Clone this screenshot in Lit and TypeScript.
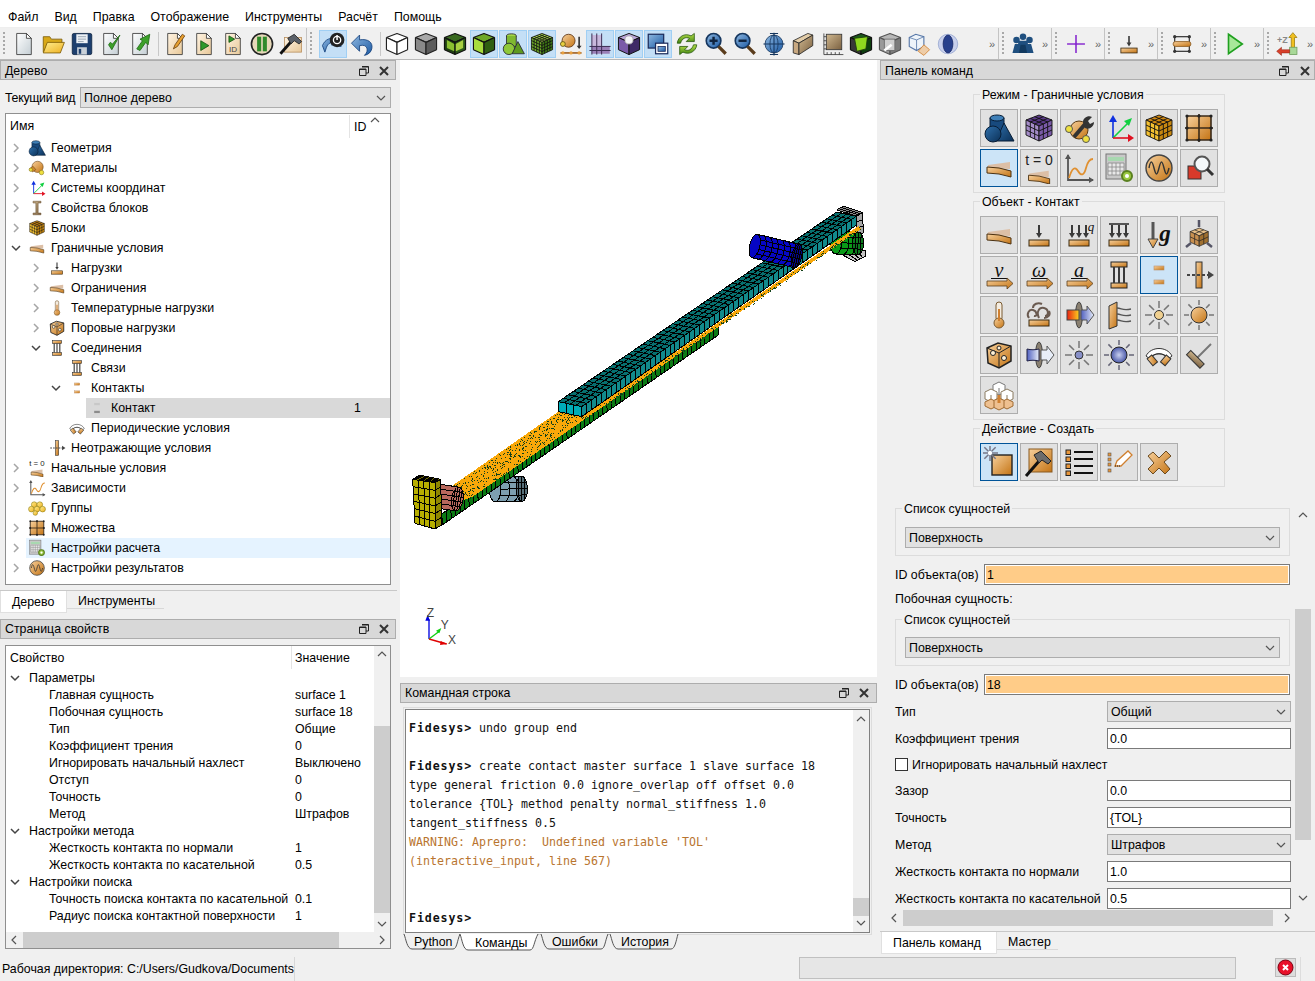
import { LitElement, html, css, svg } from 'lit';
import { customElement } from 'lit/decorators.js';

type P = [number, number];
const lerp = (a: P, b: P, t: number): P => [a[0] + (b[0] - a[0]) * t, a[1] + (b[1] - a[1]) * t];

// filled quad with a mesh drawn over it
function quad(a: P, b: P, c: P, d: P, nu: number, nv: number, fill: string, sw = 3, stroke = '#000') {
  let lines = '';
  for (let i = 0; i <= nu; i++) {
    const s = lerp(a, b, i / nu), e = lerp(d, c, i / nu);
    lines += `M${s[0]} ${s[1]}L${e[0]} ${e[1]}`;
  }
  for (let j = 0; j <= nv; j++) {
    const s = lerp(a, d, j / nv), e = lerp(b, c, j / nv);
    lines += `M${s[0]} ${s[1]}L${e[0]} ${e[1]}`;
  }
  return svg`<polygon points="${[a, b, c, d].map(p => p.join(',')).join(' ')}" fill=${fill}></polygon><path d=${lines} fill="none" stroke=${stroke} stroke-width=${sw}></path>`;
}

function cyl(a: P, b: P, r: number, e: number, nl: number, nr: number, fill: string, cap: string, sw = 3) {
  const len = Math.hypot(b[0] - a[0], b[1] - a[1]);
  const ux = (b[0] - a[0]) / len, uy = (b[1] - a[1]) / len;
  const px = -uy * r, py = ux * r;
  const ang = (Math.atan2(uy, ux) * 180) / Math.PI;
  const rx = e * r;
  const hull = `M${a[0] + px} ${a[1] + py}L${b[0] + px} ${b[1] + py}A${rx} ${r} ${ang} 0 0 ${b[0] - px} ${b[1] - py}L${a[0] - px} ${a[1] - py}A${rx} ${r} ${ang} 0 0 ${a[0] + px} ${a[1] + py}Z`;
  let lines = '';
  for (let i = 0; i <= nl; i++) {
    const c = lerp(a, b, i / nl);
    lines += `M${c[0] + px} ${c[1] + py}A${rx} ${r} ${ang} 0 0 ${c[0] - px} ${c[1] - py}`;
  }
  for (let j = 1; j < nr; j++) {
    const o = -1 + (2 * j) / nr;
    const s = Math.sqrt(1 - o * o) * rx;
    lines += `M${a[0] + px * o + ux * s} ${a[1] + py * o + uy * s}L${b[0] + px * o + ux * s} ${b[1] + py * o + uy * s}`;
  }
  let capLines = '';
  for (let j = 1; j < nr; j++) {
    const o = -1 + (2 * j) / nr;
    const s = Math.sqrt(1 - o * o) * rx;
    capLines += `M${b[0] + px * o - ux * s} ${b[1] + py * o - uy * s}L${b[0] + px * o + ux * s} ${b[1] + py * o + uy * s}`;
    capLines += `M${b[0] - ux * rx * o - px * Math.sqrt(1 - o * o)} ${b[1] - uy * rx * o - py * Math.sqrt(1 - o * o)}L${b[0] - ux * rx * o + px * Math.sqrt(1 - o * o)} ${b[1] - uy * rx * o + py * Math.sqrt(1 - o * o)}`;
  }
  return svg`<path d=${hull} fill=${fill} stroke="#000" stroke-width=${sw}></path>
    <path d=${lines} fill="none" stroke="#000" stroke-width=${sw}></path>
    <ellipse cx=${b[0]} cy=${b[1]} rx=${rx} ry=${r} transform="rotate(${ang} ${b[0]} ${b[1]})" fill=${cap} stroke="#000" stroke-width=${sw}></ellipse>
    <path d=${capLines} fill="none" stroke="#000" stroke-width=${sw}></path>`;
}

// speckle of black dots on the orange contact plate
function speckle(a: P, b: P, c: P, d: P, n: number, seed: number) {
  let s = seed;
  const rnd = () => ((s = (s * 16807) % 2147483647) / 2147483647);
  let dots = '';
  for (let i = 0; i < n; i++) {
    const u = rnd(), v = rnd();
    const p = lerp(lerp(a, b, u), lerp(d, c, u), v);
    dots += `M${p[0].toFixed(0)} ${p[1].toFixed(0)}h3v3h-3z`;
  }
  return svg`<path d=${dots} fill="#12401a"></path>`;
}

function scene() {
  return svg`
    <g shape-rendering="crispEdges">
      ${cyl([285, 868], [365, 866], 38, 0.45, 3, 4, '#7d9fb0', '#566f7a')}
      ${quad([1310, 30], [1330, 18], [1388, 38], [1370, 48], 3, 2, '#8a8a8a')}
      ${quad([1370, 48], [1388, 38], [1390, 100], [1370, 100], 1, 3, '#a8a8a8')}
      ${quad([1310, 155], [1395, 150], [1395, 170], [1365, 185], 4, 1, '#c4c4c4')}
      ${cyl([1308, 128], [1374, 130], 34, 0.5, 3, 4, '#0a9a18', '#0c7a1e')}
      ${quad([125, 942], [955, 378], [955, 405], [128, 974], 62, 1, '#0b7a14')}
      <polygon points="150,862 475,635 545,650 1375,78 1385,85 1000,350 215,892 190,900" fill="#f9a80a"></polygon>
      ${speckle([150, 862], [478, 636], [545, 652], [208, 896], 420, 77)}
      ${speckle([545, 652], [1375, 80], [1384, 86], [552, 664], 300, 1234)}
      ${quad([475, 605], [1310, 36], [1370, 48], [545, 620], 56, 4, '#06706f')}
      ${quad([545, 620], [1370, 48], [1370, 75], [545, 650], 56, 1, '#128a8c')}
      ${quad([475, 605], [545, 620], [545, 650], [475, 635], 3, 1, '#00adb8')}
      ${cyl([1064, 138], [1190, 168], 36, 0.42, 7, 5, '#0606c4', '#05058a')}
      ${cyl([58, 880], [172, 897], 36, 0.48, 1, 5, '#b9685c', '#bc6c60')}
      ${quad([38, 838], [105, 848], [105, 987], [45, 970], 4, 6, '#b7ae00')}
      ${quad([105, 848], [122, 838], [125, 975], [105, 987], 1, 6, '#8e8700')}
      ${quad([38, 838], [58, 825], [122, 838], [105, 848], 4, 1, '#6f6a00')}
    </g>
    <g fill="none">
      <path d="M87 1317V1258" stroke="#0000e0" stroke-width="4"></path>
      <path d="M76 1262l7-18 7 18z" fill="#0000e0"></path>
      <path d="M87 1317L118 1294" stroke="#10d010" stroke-width="4"></path>
      <path d="M108 1292l16-8-6 16z" fill="#10d010"></path>
      <path d="M87 1317L140 1332" stroke="#e00000" stroke-width="4"></path>
      <path d="M122 1323l20 9-22 3z" fill="#e00000"></path>
      <text x="80" y="1252" class="ax">Z</text>
      <text x="122" y="1286" class="ax">Y</text>
      <text x="144" y="1332" class="ax">X</text>
    </g>`;
}

// cube in the 32 box, three shaded faces and an n x n mesh
const cube = (t: string, l: string, r: string, n = 3, stroke = '#111', sw = 1) => svg`
  ${quad([16, 3], [29, 8], [16, 14], [3, 8], n, n, t, sw, stroke)}
  ${quad([3, 8], [16, 14], [16, 29], [3, 23], n, n, l, sw, stroke)}
  ${quad([16, 14], [29, 8], [29, 23], [16, 29], n, n, r, sw, stroke)}`;

const beam = svg`<polygon points="5,13 27,10 27,17 5,16" fill="#dcbfa6"></polygon>
  <path d="M4 15Q16 15 28 19V25Q16 21 4 21Z" fill="url(#or)" stroke="#4a3010"></path>`;
const plate = svg`<rect x="6" y="21" width="20" height="6" fill="url(#or)" stroke="#3a2a10"></rect>`;
const downArrow = (x: number) => svg`<path d="M${x} 6v10" stroke="#3a3a3a" stroke-width="2"></path><path d="M${x - 3} 14h6l-3 5z" fill="#3a3a3a"></path>`;
const hArrowPlate = svg`<path d="M4 22h20v-3l6 5.500-6 5.500v-3H4z" fill="url(#or)" stroke="#5a4020" stroke-width=".8"></path>`;
const column = svg`<rect x="8" y="3" width="16" height="5" fill="url(#or)" stroke="#222"></rect>
  <rect x="8" y="24" width="16" height="5" fill="url(#or)" stroke="#222"></rect>
  <path d="M11 8v16M16 8v16M21 8v16" stroke="#3a3a3a" stroke-width="2"></path>`;
const rays = (r0: number, r1: number, color: string) => {
  let d = '';
  for (let i = 0; i < 8; i++) {
    const a = (i * Math.PI) / 4;
    d += `M${16 + r0 * Math.cos(a)} ${16 + r0 * Math.sin(a)}L${16 + r1 * Math.cos(a)} ${16 + r1 * Math.sin(a)}`;
  }
  return svg`<path d=${d} stroke=${color} stroke-width="1.5" fill="none"></path>`;
};
const doc = (fill: string) => svg`<path d="M7 3h12l6 6v20H7z" fill=${fill} stroke="#333"></path><path d="M19 3v6h6z" fill="#fff" stroke="#333"></path>`;
const mag = (inner: string) => svg`<circle cx="13" cy="12" r="9" fill="url(#bl)" stroke="#16365e" stroke-width="2"></circle>
  <path d="M19 19l9 9" stroke="#5a3c1c" stroke-width="4"></path>
  <path d=${inner} stroke="#10243f" stroke-width="3"></path>`;
const ubeam = svg`<path d="M3 18C6 10 14 7 21 10l3-4 2 13-12-2 4-3c-4-1-8 1-10 6l-2 6z" fill="url(#bl)" stroke="#123f7a"></path>`;

const ICONS: Record<string, unknown> = {
  new: doc('url(#dc)'),
  open: svg`<path d="M4 26V7h8l2 3h13v6" fill="#d8a818" stroke="#7a5a08"></path><path d="M4 27l5-13h21l-5 13z" fill="url(#ye)" stroke="#7a5a08"></path>`,
  save: svg`<rect x="4" y="3" width="24" height="26" rx="2" fill="#1d3f6e" stroke="#0c2340"></rect><rect x="9" y="4" width="14" height="11" fill="#eef2f6"></rect><path d="M11 7h10M11 10h10M11 13h7" stroke="#8a99a8"></path><rect x="10" y="20" width="12" height="9" fill="#c8d0d8"></rect><rect x="12" y="22" width="3" height="6" fill="#1d3f6e"></rect>`,
  imp: svg`${doc('url(#dc)')}<path d="M13 17l4 6 10-18-9 11-3-2z" fill="#3ca02a" stroke="#1e6a12"></path>`,
  exp: svg`${doc('url(#dc)')}<path d="M12 22l7-10-3-2 12-6-2 13-3-3-7 10z" fill="#3ca02a" stroke="#1e6a12"></path>`,
  jour: svg`${doc('url(#cr)')}<path d="M14 22l2-5 9-13 3 2-9 13z" fill="#e8a030" stroke="#6a4010"></path>`,
  run: svg`${doc('url(#cr)')}<path d="M12 12l10 6-10 6z" fill="#2f9a2a" stroke="#14500f"></path>`,
  idd: svg`${doc('url(#cr)')}<path d="M11 6l7 4-7 4z" fill="#2f9a2a" stroke="#14500f"></path><text x="16" y="26" class="sans" font-size="10" text-anchor="middle" fill="#444">ID</text>`,
  pause: svg`<circle cx="16" cy="16" r="13" fill="#e6d8b8" stroke="#222" stroke-width="2"></circle><rect x="10" y="7" width="5" height="18" fill="#2f8a2a"></rect><rect x="17" y="7" width="5" height="18" fill="#2f8a2a"></rect>`,
  hamdoc: svg`<rect x="8" y="8" width="21" height="18" fill="url(#cr)" stroke="#b89060"></rect><path d="M3 28L18 11" stroke="#111" stroke-width="3.5"></path><path d="M12 9l8-5 9 9-3 3-6-4-4 4z" fill="#5a6068" stroke="#222"></path>`,
  puw: svg`${ubeam}<circle cx="21" cy="11" r="9" fill="#222"></circle><circle cx="21" cy="11" r="4.5" fill="none" stroke="#fff" stroke-width="1.6"></circle><path d="M21 5v6" stroke="#fff" stroke-width="1.8"></path>`,
  undo: svg`<path d="M3 15l10-10v6c10-2 17 3 15 11-1 4-4 7-9 8 3-3 4-6 3-9-1-3-4-4-9-3v7z" fill="url(#bl)" stroke="#123f7a"></path>`,
  wire: cube('#fff', '#fff', '#fff', 1, '#222', 1.4),
  gray: cube('#a8a8a8', '#8a8a8a', '#5c5c5c', 1, '#222', 1.4),
  hollow: svg`${cube('#3a6a20', '#1f3f12', '#2c5a18', 1, '#111', 1.4)}<polygon points="6,11 15,16 15,25 6,21" fill="#8ac030"></polygon><polygon points="17,16 26,11 26,21 17,25" fill="#a8d040"></polygon>`,
  green: cube('#6ea828', '#a8dc3c', '#2f5f10', 1, '#111', 1.4),
  gshapes: svg`<ellipse cx="14" cy="6" rx="6" ry="2.5" fill="#a8d84a" stroke="#223"></ellipse><path d="M8 6v13h12V6" fill="#7fb830" stroke="#223"></path><circle cx="11" cy="22" r="7" fill="#8fc83a" stroke="#223"></circle><path d="M22 13l8 15H15z" fill="#5f9a20" stroke="#223"></path>`,
  gmesh: cube('#a8d84a', '#6ea828', '#3f7a14', 4),
  ball: svg`<circle cx="13" cy="12" r="8" fill="url(#or)" stroke="#5a3010"></circle><circle cx="6" cy="16" r="3" fill="#e8d040" stroke="#5a5010"></circle><path d="M26 7v13" stroke="#333" stroke-width="2"></path><path d="M23 18h6l-3 4z" fill="#333"></path><path d="M3 27h26" stroke="#a06020" stroke-width="2"></path><circle cx="6" cy="27" r="2" fill="#e8a040"></circle><circle cx="16" cy="27" r="2" fill="#e8a040"></circle><circle cx="26" cy="27" r="2" fill="#e8a040"></circle>`,
  pgrid: svg`<rect x="6" y="5" width="12" height="14" fill="#c8b8dc"></rect><rect x="6" y="19" width="22" height="9" fill="#9a80b8"></rect><path d="M6 3v26M12 3v26M18 3v26M3 19h26M3 24h26" stroke="#3a2a50" stroke-width="1.2"></path>`,
  pcube: svg`${cube('#b9a4d8', '#7a5aa8', '#3f2a66', 1, '#111', 1.2)}<circle cx="16" cy="11" r="5" fill="#f4f4f8" stroke="#aaa"></circle>`,
  stack: svg`<rect x="4" y="4" width="19" height="17" fill="url(#bl)" stroke="#1a2a5a" stroke-width="1.5"></rect><rect x="13" y="15" width="15" height="13" fill="#fff" stroke="#1a2a5a" stroke-width="1.5"></rect><rect x="16" y="19" width="9" height="6" fill="url(#bl)" stroke="#1a2a5a"></rect>`,
  refresh: svg`<path d="M4 15C5 7 13 2 21 6l4-3v10H15l4-4c-5-2-9 0-11 6z" fill="url(#gr)" stroke="#2a5a10"></path><path d="M28 17c-1 8-9 13-17 9l-4 3V19h10l-4 4c5 2 9 0 11-6z" fill="url(#gr)" stroke="#2a5a10"></path>`,
  zin: mag('M8 12h10M13 7v10'),
  zout: mag('M8 12h10'),
  globe: svg`<circle cx="16" cy="16" r="11" fill="url(#bl)" stroke="#16365e"></circle><ellipse cx="16" cy="16" rx="5" ry="11" fill="none" stroke="#16365e"></ellipse><path d="M3 16h26M16 2v28M11 3h10M11 29h10" stroke="#16365e" stroke-width="1.3"></path>`,
  tbox: svg`<polygon points="4,12 22,3 28,5 11,15" fill="#e2cca8" stroke="#222"></polygon><polygon points="4,12 11,15 11,29 4,27" fill="#c8a880" stroke="#222"></polygon><polygon points="11,15 28,5 28,18 11,29" fill="url(#tn)" stroke="#222"></polygon>`,
  ruler: svg`<rect x="9" y="4" width="19" height="19" fill="url(#tn)" stroke="#333"></rect><path d="M6 3v26h24M6 7h3M6 12h3M6 17h3M6 22h3M10 26v3M15 26v3M20 26v3M25 26v3" stroke="#333" fill="none"></path>`,
  gbox: svg`${cube('#1d5a1d', '#383838', '#0e3f0e', 1, '#111', 1.4)}<polygon points="8,9 24,7 22,22 11,25" fill="#8fd81f" stroke="#1a3a08"></polygon>`,
  xbox: svg`${cube('#b8b8b8', '#9a9a9a', '#7c7c7c', 1, '#555', 1.4)}<rect x="9" y="10" width="13" height="14" fill="#d0d0d0" stroke="#666"></rect><path d="M9 24l9-7" stroke="#fff" stroke-width="3"></path>`,
  wcube: svg`<polygon points="4,8 12,4 22,7 22,19 13,24 4,19" fill="#eef4fa" stroke="#5878a8" stroke-width="1.4"></polygon><path d="M13 11v13M4 8l9 3 9-4" stroke="#5878a8" fill="none"></path><polygon points="15,25 22,17 29,23 22,30" fill="#eecda8" stroke="#d08030"></polygon>`,
  oval: svg`<ellipse cx="16" cy="16" rx="12" ry="12" fill="#c8d0ec" stroke="#98a8d0"></ellipse><ellipse cx="16" cy="16" rx="6" ry="11" fill="#28408c" stroke="#182868"></ellipse>`,
  people: svg`<circle cx="16" cy="7" r="4" fill="#1f4f7f"></circle><circle cx="8" cy="11" r="4" fill="#1f4f7f"></circle><circle cx="24" cy="11" r="4" fill="#1f4f7f"></circle><path d="M3 27l3-11h20l3 11zM10 12h12v8H10z" fill="#1f4f7f"></path><path d="M11 27l2-10h6l2 10z" fill="#123a60"></path>`,
  plus: svg`<path d="M16 5v22M5 16h22" stroke="#8a2fd0" stroke-width="2"></path><circle cx="16" cy="16" r="1.5" fill="#8a2fd0"></circle>`,
  load: svg`${plate}${downArrow(16)}`,
  nodes: svg`<rect x="7" y="7" width="18" height="18" fill="none" stroke="#333" stroke-width="1.5"></rect><rect x="5" y="13" width="22" height="6" rx="3" fill="url(#or)" stroke="#8a5a20"></rect><circle cx="7" cy="7" r="2" fill="#333"></circle><circle cx="25" cy="7" r="2" fill="#333"></circle><circle cx="7" cy="25" r="2" fill="#333"></circle><circle cx="25" cy="25" r="2" fill="#333"></circle>`,
  play: svg`<path d="M8 4l17 12L8 28z" fill="#a8e89a" stroke="#1fa01f" stroke-width="2"></path>`,
  axz: svg`<text x="9" y="15" class="sans" font-size="11" font-weight="bold" text-anchor="middle" fill="#888">+Z</text><path d="M20 24V8h-3l5-6 5 6h-3v16z" fill="#f0c020" stroke="#a08010"></path><rect x="18" y="20" width="9" height="9" fill="#a8d898" stroke="#70a060"></rect><path d="M18 27H8v3L2 25l6-5v3h10z" fill="#d8402a" stroke="#8a2010" stroke-width=".6"></path>`,
  shapes: svg`<path d="M7 6v15h14V6" fill="#184a7e" stroke="#071d36"></path><ellipse cx="14" cy="6" rx="7" ry="3" fill="#3f80b8" stroke="#071d36"></ellipse><path d="M21 11l10 18H13z" fill="url(#nv)" stroke="#071d36"></path><circle cx="10" cy="22" r="8" fill="url(#nv)" stroke="#071d36"></circle>`,
  pmesh: cube('#5a3a88', '#a48cc8', '#7a5aa8', 3, '#111', .9),
  omesh: cube('#d08810', '#f4c030', '#c88810', 3, '#111', .9),
  mat: svg`<circle cx="17" cy="14" r="10" fill="url(#or)" stroke="#6a4010"></circle><path d="M3 17l6-4 5 6-6 4z" fill="#d08a30" stroke="#6a4010"></path><circle cx="24" cy="24" r="4" fill="#eee040" stroke="#807010"></circle><circle cx="5" cy="19" r="3" fill="#eee040" stroke="#807010"></circle>`,
  wrench: svg`<circle cx="16" cy="18" r="9" fill="url(#or)" stroke="#5a3a10"></circle><circle cx="6" cy="17" r="3.5" fill="#eee040" stroke="#555"></circle><circle cx="23" cy="27" r="3.5" fill="#eee040" stroke="#555"></circle><path d="M11 25L23 11" stroke="#333" stroke-width="4"></path><path d="M20 10c0-4 5-7 9-5l-4 4 2 3 4-2c0 5-5 8-9 6z" fill="#333"></path>`,
  axes: svg`<path d="M10 26V7" stroke="#1030e0" stroke-width="1.6"></path><path d="M6 10l4-7 4 7z" fill="#1030e0"></path><path d="M10 26L25 11" stroke="#10d040" stroke-width="1.6"></path><path d="M21 9l8-3-3 8z" fill="#10d040"></path><path d="M10 26h17" stroke="#e01020" stroke-width="1.6"></path><path d="M25 22l6 4-6 4z" fill="#e01020"></path>`,
  ogrid: svg`<rect x="4" y="4" width="24" height="24" fill="url(#or)"></rect><path d="M4 4h24v24H4zM16 2v28M2 16h28" stroke="#3a2a18" stroke-width="1.6" fill="none"></path><circle cx="4" cy="4" r="1.6" fill="#222"></circle><circle cx="16" cy="4" r="1.6" fill="#222"></circle><circle cx="28" cy="4" r="1.6" fill="#222"></circle><circle cx="4" cy="16" r="1.6" fill="#222"></circle><circle cx="28" cy="16" r="1.6" fill="#222"></circle><circle cx="4" cy="28" r="1.6" fill="#222"></circle><circle cx="16" cy="28" r="1.6" fill="#222"></circle><circle cx="28" cy="28" r="1.6" fill="#222"></circle>`,
  bc: beam,
  t0: svg`<text x="16" y="13" class="sans" font-size="14" text-anchor="middle" fill="#222">t = 0</text><g transform="translate(2 10) scale(.88)">${beam}</g>`,
  graph: svg`<path d="M5 3v25h25" fill="none" stroke="#555" stroke-width="1.8"></path><path d="M2 7l3-5 3 5zM26 25l5 3-5 3z" fill="#555"></path><path d="M6 26c3-10 6-12 9-7s6 5 8-3 5-9 7-9" fill="none" stroke="#e09030" stroke-width="1.8"></path>`,
  calc: svg`<rect x="3" y="2" width="20" height="25" fill="#c8c8c8" stroke="#777"></rect><rect x="5" y="5" width="16" height="4" fill="#a8d8b0"></rect><path d="M5 11h16v12H5zM9 11v12M13 11v12M17 11v12M5 15h16M5 19h16" fill="#e8e8e8" stroke="#888" stroke-width=".8"></path><circle cx="24" cy="24" r="5" fill="#9ac840" stroke="#5a8020" stroke-width="2"></circle><circle cx="24" cy="24" r="2" fill="#fff"></circle>`,
  wave: svg`<circle cx="16" cy="16" r="13" fill="url(#or)" stroke="#444" stroke-width="1.4"></circle><path d="M6 16c1.500-8 3-8 5 0s3 8 5 0 3-8 5 0 3 8 5 0" fill="none" stroke="#333" stroke-width="1.4"></path>`,
  redmag: svg`<rect x="5" y="14" width="13" height="13" fill="#d83a2a" stroke="#333"></rect><circle cx="19" cy="12" r="7.500" fill="#f4f8fa" stroke="#555" stroke-width="2"></circle><path d="M24 17l6 6" stroke="#333" stroke-width="3"></path>`,
  loadq: svg`${plate}${downArrow(9)}${downArrow(16)}${downArrow(23)}<text x="28" y="12" class="serif" font-size="13" font-style="italic" text-anchor="middle" fill="#111">q</text>`,
  loadd: svg`${plate}<path d="M6 5h20" stroke="#333" stroke-width="1.6"></path>${downArrow(9)}${downArrow(16)}${downArrow(23)}`,
  gravity: svg`<path d="M10 3v19" stroke="#555" stroke-width="3"></path><path d="M5 20h10l-5 9z" fill="url(#or)" stroke="#444"></path><text x="22" y="22" class="serif" font-size="23" font-weight="bold" font-style="italic" text-anchor="middle" fill="#111">g</text>`,
  mini: svg`<g transform="translate(5 7) scale(.7)">${cube('#e8c088', '#c89050', '#a07030', 2, '#222', 1)}</g><path d="M16 1v7M3 28l5-4M29 28l-5-4" stroke="#556" stroke-width="2.500"></path>`,
  vel: svg`<text x="16" y="18" class="serif" font-size="20" font-style="italic" text-anchor="middle" fill="#111">v</text><path d="M8 19.500h16" stroke="#111"></path>${hArrowPlate}`,
  omega: svg`<text x="16" y="18" class="serif" font-size="20" font-style="italic" text-anchor="middle" fill="#111">ω</text><path d="M8 19.500h16" stroke="#111"></path>${hArrowPlate}`,
  acc: svg`<text x="16" y="18" class="serif" font-size="20" font-style="italic" text-anchor="middle" fill="#111">a</text><path d="M8 19.500h16" stroke="#111"></path>${hArrowPlate}`,
  column,
  contact: svg`<rect x="11" y="7" width="10" height="4" fill="url(#or)" stroke="#b89070" stroke-width=".6"></rect><rect x="11" y="21" width="10" height="4" fill="url(#or)" stroke="#b89070" stroke-width=".6"></rect>`,
  contactg: svg`<rect x="11" y="7" width="10" height="4" fill="#c8c8c8"></rect><rect x="11" y="21" width="10" height="4" fill="#8c8c8c"></rect>`,
  nonref: svg`<rect x="13" y="3" width="6" height="26" fill="url(#or)" stroke="#333"></rect><path d="M4 16h23" stroke="#444" stroke-width="2" stroke-dasharray="3 2"></path><path d="M25 12l6 4-6 4z" fill="#444"></path>`,
  thermo: svg`<rect x="13" y="3" width="6" height="19" rx="3" fill="#f4ece0" stroke="#7a5a30"></rect><circle cx="16" cy="24" r="5" fill="url(#or)" stroke="#7a5a30"></circle><path d="M16 10v12" stroke="#d08030" stroke-width="2"></path>`,
  wind: svg`${plate}<path d="M6 19c-3-4 0-9 4-8s5 7 1 6m5 2c-3-6 0-11 5-10s5 8 1 8m-12-8c0-4 5-6 9-4m2 14c4 0 7-3 5-7" fill="none" stroke="#6a5a50" stroke-width="2"></path>`,
  flux: svg`<ellipse cx="16" cy="16" rx="3.500" ry="13" fill="#8a8070" stroke="#444"></ellipse><rect x="4" y="11" width="12" height="10" fill="url(#hot)" stroke="#444"></rect><path d="M18 11h6V7l7 9-7 9v-4h-6z" fill="url(#bl2)" stroke="#555"></path>`,
  wall: svg`<polygon points="6,7 14,3 14,27 6,30" fill="url(#or)" stroke="#333"></polygon><path d="M14 9c5 0 5 3 14 1M14 15c5 0 5 3 14 1M14 21c5 0 5 3 14 1" fill="none" stroke="#555" stroke-width="1.300"></path>`,
  sun1: svg`${rays(7, 14, '#777')}<circle cx="16" cy="16" r="4.500" fill="#f0d090" stroke="#333"></circle>`,
  sun2: svg`${rays(10, 15, '#777')}<circle cx="16" cy="16" r="8" fill="url(#or)" stroke="#333"></circle>`,
  porous: svg`<polygon points="4,9 15,4 28,7 28,22 16,29 5,24" fill="url(#or)" stroke="#222" stroke-width="1.500"></polygon><path d="M4 9l12 5 12-7M16 14v15" stroke="#222" fill="none"></path><circle cx="10" cy="14" r="2.500" fill="#fff2d8" stroke="#222"></circle><circle cx="21" cy="19" r="2.500" fill="#fff2d8" stroke="#222"></circle><circle cx="16" cy="9" r="2" fill="#fff2d8" stroke="#222"></circle>`,
  bflux: svg`<ellipse cx="16" cy="16" rx="3.500" ry="13" fill="#8a8070" stroke="#444"></ellipse><path d="M4 10c4 1 8 1 12 0v12c-4-1-8-1-12 0z" fill="url(#bl2)" stroke="#224"></path><path d="M18 11h6V7l7 9-7 9v-4h-6z" fill="#e8eef8" stroke="#555"></path>`,
  sun3: svg`${rays(7, 14, '#777')}<circle cx="16" cy="16" r="4" fill="#8890c8" stroke="#333"></circle>`,
  sun4: svg`${rays(10, 15, '#667')}<circle cx="16" cy="16" r="8" fill="url(#bl3)" stroke="#222"></circle>`,
  periodic: svg`<path d="M3 17C8 7 24 7 29 17l-4 3C20 13 12 13 7 20z" fill="#fff" stroke="#333"></path><path d="M9 17c3-3 11-3 14 0" fill="none" stroke="#333"></path><rect x="6" y="17" width="6" height="9" transform="rotate(-40 9 21)" fill="url(#or)" stroke="#333"></rect><rect x="20" y="17" width="6" height="9" transform="rotate(40 23 21)" fill="url(#or)" stroke="#333"></rect>`,
  sweep: svg`<path d="M14 19L28 5" stroke="#777" stroke-width="2"></path><rect x="3" y="17" width="19" height="6" transform="rotate(45 12 20)" fill="url(#tn)" stroke="#333"></rect>`,
  cubes: svg`<g stroke="#777" fill="#fff"><polygon points="16,3 22,6 16,9 10,6"></polygon><path d="M10 6v7l6 3 6-3V6M16 9v7"></path></g><g stroke="#8a7a60" fill="#fff"><polygon points="8,10 14,13 8,16 2,13"></polygon><path d="M2 13v7l6 3 6-3v-7M8 16v7"></path><polygon points="24,10 30,13 24,16 18,13"></polygon><path d="M18 13v7l6 3 6-3v-7M24 16v7"></path></g><g stroke="#a06a30" fill="#eec090"><polygon points="8,20 14,23 8,26 2,23"></polygon><path d="M2 23v4l6 3 6-3v-4"></path><polygon points="24,20 30,23 24,26 18,23"></polygon><path d="M18 23v4l6 3 6-3v-4"></path><polygon points="16,19 21,21.500 16,24 11,21.500"></polygon><path d="M11 21.500v7l5 2.500 5-2.500v-7"></path></g><path d="M16 16v8" stroke="#d08030" stroke-width="3"></path>`,
  create: svg`<rect x="9" y="9" width="20" height="20" fill="url(#or)" stroke="#222" stroke-width="1.400"></rect><g transform="translate(-9 -9)">${rays(2, 8, '#778')}</g><circle cx="7" cy="7" r="2" fill="#fff"></circle>`,
  hammer: svg`<rect x="6" y="3" width="23" height="23" fill="url(#or)" stroke="#8a5a20"></rect><path d="M3 30L17 14" stroke="#111" stroke-width="3"></path><path d="M11 9l7-4 10 10-3 3-6-4-3 3z" fill="#6c6c6c" stroke="#222"></path>`,
  list: svg`<g fill="#e8963a" stroke="#222"><rect x="3" y="4" width="4.500" height="4.500"></rect><rect x="3" y="11" width="4.500" height="4.500"></rect><rect x="3" y="18" width="4.500" height="4.500"></rect><rect x="3" y="25" width="4.500" height="4.500"></rect></g><path d="M11 6h19M11 13h19M11 20h19M11 27h19" stroke="#111" stroke-width="2.200"></path>`,
  listed: svg`<g fill="#e8963a" stroke="#555" stroke-width=".6"><rect x="5" y="7" width="3" height="3"></rect><rect x="5" y="12" width="3" height="3"></rect><rect x="5" y="17" width="3" height="3"></rect><rect x="5" y="23" width="3" height="3"></rect></g><path d="M12 20l2-5 11-10 4 4-11 11z" fill="#fff" stroke="#d08030" stroke-width="1.300"></path><path d="M12 20l6 0" stroke="#222" stroke-dasharray="1 1"></path>`,
  xx: svg`<path d="M5 10l5-4 6 6 7-7 5 5-7 6 6 7-5 5-6-6-6 6-5-5 6-6z" fill="url(#or)" stroke="#6a4a20"></path>`,
  ibeam: svg`<path d="M9 4h14v3h-5v18h5v3H9v-3h5V7H9z" fill="url(#tn)" stroke="#6a5030"></path>`,
  groups: svg`<g fill="url(#ye)" stroke="#8a7a10"><circle cx="11" cy="10" r="5"></circle><circle cx="21" cy="10" r="5"></circle><circle cx="6" cy="18" r="5"></circle><circle cx="16" cy="18" r="5"></circle><circle cx="26" cy="18" r="5"></circle><circle cx="13" cy="25" r="4"></circle></g>`,
};

const icon = (name: string, size: number) => html`<svg class="ic" width=${size} height=${size} viewBox="0 0 32 32">${ICONS[name]}</svg>`;

const chev = (dir: string, cls = 'chev') => {
  const d: Record<string, string> = { r: 'M3 1l4 4-4 4', d: 'M1 3l4 4 4-4', u: 'M1 7l4-4 4 4', l: 'M7 1L3 5l4 4' };
  return html`<svg class=${cls} width="10" height="10" viewBox="0 0 10 10"><path d=${d[dir]} fill="none"></path></svg>`;
};

const dockBtns = html`
  <svg width="10" height="10" viewBox="0 0 10 10" class="dk"><path d="M3 .5h6.500v6.500H7M.5 3h6.500v6.500H.5z" fill="none" stroke="#222"></path><path d="M.5 3.500h6.500M3 1h6.500" stroke="#222"></path></svg>
  <svg width="10" height="10" viewBox="0 0 10 10" class="dk"><path d="M1 1l8 8M9 1l-8 8" stroke="#333" stroke-width="2"></path></svg>`;

const TB1 = ['new', 'open', 'save', 'imp', 'exp', '|', 'jour', 'run', 'idd', 'pause', 'hamdoc'];
const TB2 = ['puw*', 'undo', '|', 'wire', 'gray', 'hollow', 'green*', 'gshapes*', 'gmesh*', 'ball', 'pgrid*', 'pcube*', 'stack*', 'refresh', 'zin', 'zout', 'globe', 'tbox', 'ruler', 'gbox', 'xbox', 'wcube', 'oval'];
const TB3 = ['people', 'plus', 'load', 'nodes', 'play', 'axz'];

interface TreeRow { label: string; depth: number; icon: string; exp?: 'o' | 'c'; id?: string; cls?: string }
const TREE: TreeRow[] = [
  { label: 'Геометрия', depth: 0, icon: 'shapes', exp: 'c' },
  { label: 'Материалы', depth: 0, icon: 'mat', exp: 'c' },
  { label: 'Системы координат', depth: 0, icon: 'axes', exp: 'c' },
  { label: 'Свойства блоков', depth: 0, icon: 'ibeam', exp: 'c' },
  { label: 'Блоки', depth: 0, icon: 'omesh', exp: 'c' },
  { label: 'Граничные условия', depth: 0, icon: 'bc', exp: 'o' },
  { label: 'Нагрузки', depth: 1, icon: 'load', exp: 'c' },
  { label: 'Ограничения', depth: 1, icon: 'bc', exp: 'c' },
  { label: 'Температурные нагрузки', depth: 1, icon: 'thermo', exp: 'c' },
  { label: 'Поровые нагрузки', depth: 1, icon: 'porous', exp: 'c' },
  { label: 'Соединения', depth: 1, icon: 'column', exp: 'o' },
  { label: 'Связи', depth: 2, icon: 'column' },
  { label: 'Контакты', depth: 2, icon: 'contact', exp: 'o' },
  { label: 'Контакт', depth: 3, icon: 'contactg', id: '1', cls: 'sel' },
  { label: 'Периодические условия', depth: 2, icon: 'periodic' },
  { label: 'Неотражающие условия', depth: 1, icon: 'nonref' },
  { label: 'Начальные условия', depth: 0, icon: 't0', exp: 'c' },
  { label: 'Зависимости', depth: 0, icon: 'graph', exp: 'c' },
  { label: 'Группы', depth: 0, icon: 'groups' },
  { label: 'Множества', depth: 0, icon: 'ogrid', exp: 'c' },
  { label: 'Настройки расчета', depth: 0, icon: 'calc', exp: 'c', cls: 'hov' },
  { label: 'Настройки результатов', depth: 0, icon: 'wave', exp: 'c' },
];

const PROPS: [string, string, number][] = [
  ['Параметры', '', 0],
  ['Главная сущность', 'surface 1', 1],
  ['Побочная сущность', 'surface 18', 1],
  ['Тип', 'Общие', 1],
  ['Коэффициент трения', '0', 1],
  ['Игнорировать начальный нахлест', 'Выключено', 1],
  ['Отступ', '0', 1],
  ['Точность', '0', 1],
  ['Метод', 'Штрафов', 1],
  ['Настройки метода', '', 0],
  ['Жесткость контакта по нормали', '1', 1],
  ['Жесткость контакта по касательной', '0.5', 1],
  ['Настройки поиска', '', 0],
  ['Точность поиска контакта по касательной', '0.1', 1],
  ['Радиус поиска контактной поверхности', '1', 1],
];

const MODE = ['shapes', 'pmesh', 'wrench', 'axes', 'omesh', 'ogrid', 'bc*', 't0', 'graph', 'calc', 'wave', 'redmag'];
const OBJ = ['bc', 'load', 'loadq', 'loadd', 'gravity', 'mini', 'vel', 'omega', 'acc', 'column', 'contact*', 'nonref', 'thermo', 'wind', 'flux', 'wall', 'sun1', 'sun2', 'porous', 'bflux', 'sun3', 'sun4', 'periodic', 'sweep', 'cubes'];
const ACT = ['create*', 'hammer', 'list', 'listed', 'xx'];

const btnGrid = (names: string[]) => html`<div class="bgrid">${names.map(n => {
  const on = n.endsWith('*');
  return html`<div class="pb ${on ? 'on' : ''}">${icon(on ? n.slice(0, -1) : n, 32)}</div>`;
})}</div>`;

const tbBtn = (n: string) => {
  if (n === '|') return html`<div class="tsep"></div>`;
  const on = n.endsWith('*');
  return html`<div class="tb ${on ? 'on' : ''}">${icon(on ? n.slice(0, -1) : n, 26)}</div>`;
};

const vbar = (top: number, len: number, arrow = 16) => html`<div class="vsb">
  <div class="ar" style="height:${arrow}px">${chev('u')}</div>
  <div class="trk"><div class="th" style="margin-top:${top}px;height:${len}px"></div></div>
  <div class="ar" style="height:${arrow}px">${chev('d')}</div>
</div>`;

const hbar = (left: number, len: number) => html`<div class="hsb">
  <div class="ar">${chev('l')}</div>
  <div class="trk"><div class="th" style="margin-left:${left}px;width:${len}px"></div></div>
  <div class="ar">${chev('r')}</div>
</div>`;

const combo = (text: string, cls = '') => html`<div class="combo ${cls}"><span>${text}</span>${chev('d')}</div>`;

@customElement('app-root')
export class AppRoot extends LitElement {
  static styles = css`
    :host {
      display: block;
      width: 1315px;
      height: 981px;
      overflow: hidden;
      background: #f0f0f0;
      color: #000;
      font: 12.36px/14px 'Liberation Sans', Arial, sans-serif;
    }
    svg { display: block; flex: none; }
    .defs { width: 0; height: 0; }
    .sans { font-family: 'Liberation Sans', sans-serif; }
    .serif { font-family: 'Liberation Serif', serif; }
    .ax { font: 36px 'Liberation Sans', sans-serif; fill: #444; }
    .chev path { stroke: #555; stroke-width: 1.2; }
    .menu { height: 27px; background: #fff; display: flex; padding-top: 10px; box-sizing: border-box; }
    .menu span { padding: 0 8px; }
    .toolbar { height: 33px; box-sizing: border-box; display: flex; border-top: 1px solid #eee; border-bottom: 1px solid #b8b8b8; background: #f0f0f0; }
    .tgroup { display: flex; align-items: center; border-right: 1px solid #c4c4c4; flex: none; box-sizing: border-box; }
    .handle { width: 2px; height: 24px; margin: 0 5px 0 3px; flex: none; background: repeating-linear-gradient(#a8a8a8 0 2px, transparent 2px 4px); }
    .handle.wide { margin-right: 7px; }
    .tb { width: 28px; height: 28px; margin-right: 1px; display: flex; align-items: center; justify-content: center; border: 1px solid transparent; box-sizing: border-box; flex: none; }
    .tb.on { background: #c4dff6; border-color: #a0cff4; }
    .tsep { width: 1px; height: 24px; background: #c8c8c8; margin: 0 2.5px; flex: none; }
    .more { color: #666; font-size: 11px; letter-spacing: -1px; margin-left: auto; margin-right: 4px; }
    .main { display: grid; grid-template-columns: 397px 477px 435px; column-gap: 3px; height: 897px; }
    .col { display: flex; flex-direction: column; min-width: 0; }
    .dtitle { height: 20px; box-sizing: border-box; flex: none; display: flex; align-items: center; background: #d8d8d8; border: 1px solid #adadad; padding: 1px 7px 0 4px; gap: 10px; }
    .dtitle span { flex: 1; }
    .dtitle.lt { margin-right: 1px; padding-right: 6px; }
    .dtitle.rt { gap: 11px; padding-right: 4px; }
    .dtitle.cmd, .dtitle.prop { margin-top: 6px; padding-top: 0; }
    .curview { display: flex; align-items: center; margin: 7px 6px 5px 5px; }
    .curview > span { width: 75px; flex: none; white-space: nowrap; letter-spacing: -.3px; }
    .combo { height: 21px; box-sizing: border-box; background: #e1e1e1; border: 1px solid #adadad; display: flex; align-items: center; justify-content: space-between; padding: 0 4px 0 3px; flex: 1; }
    .box { background: #fff; border: 1px solid #8f8f8f; box-sizing: border-box; }
    .tree { margin: 0 6px 0 5px; height: 472px; }
    .thead { height: 24px; display: flex; align-items: center; }
    .thead .n { flex: none; width: 343px; padding-left: 4px; box-sizing: border-box; }
    .thead .i { flex: 1; height: 23px; border-left: 1px solid #e4e4e4; padding: 5px 0 0 4px; box-sizing: border-box; display: flex; }
    .thead .chev { margin: -5px 0 0 4px; }
    .trow { height: 20px; display: flex; align-items: center; }
    .exp { width: 20px; flex: none; display: flex; justify-content: center; }
    .trow .c .chev path { stroke: #a6a6a6; stroke-width: 1.500; }
    .trow .o .chev path { stroke: #444; stroke-width: 1.500; }
    .tcell { flex: 1; height: 20px; display: flex; align-items: center; padding-left: 2px; gap: 5px; min-width: 0; }
    .tcell .name { flex: 1; white-space: nowrap; }
    .tcell .id { width: 36px; flex: none; }
    .sel .tcell { background: #d9d9d9; }
    .hov .tcell { background: #e5f3ff; }
    .tabs { display: flex; flex: none; height: 23px; border-top: 1px solid #c8c8c8; box-sizing: border-box; }
    .tabs div { padding: 3px 10px 0 11px; height: 18px; border-bottom: 1px solid #d8d8d8; flex: none; white-space: nowrap; }
    .tabs .act { background: #fff; height: 22px; padding-top: 4px; border: 1px solid #e0e0e0; border-top: none; box-sizing: border-box; }
    .ltabs { margin-top: 5px; }
    .ltabs .act { width: 67px; }
    .ltabs .ina { width: 97px; box-sizing: border-box; }
    .props { margin: 6px 6px 0 5px; height: 304px; display: grid; grid-template-columns: 1fr 16px; grid-template-rows: 1fr 16px; }
    .pbody { min-width: 0; overflow: hidden; }
    .phead { height: 23px; display: flex; align-items: center; }
    .phead .a { width: 285px; padding-left: 4px; box-sizing: border-box; }
    .phead .b { border-left: 1px solid #e4e4e4; padding-left: 3px; height: 23px; display: flex; align-items: center; }
    .prow { height: 17px; display: flex; align-items: center; white-space: nowrap; }
    .prow .lbl { width: 289px; flex: none; box-sizing: border-box; display: flex; align-items: center; }
    .prow .tw { width: 18px; flex: none; display: flex; justify-content: center; }
    .prow .tw path { stroke: #444; stroke-width: 1.500; }
    .prow .ind { padding-left: 43px; }
    .prow .gr { gap: 5px; }
    .vsb { width: 16px; display: flex; flex-direction: column; background: #f0f0f0; flex: none; }
    .vsb .ar { display: flex; align-items: center; justify-content: center; flex: none; }
    .vsb .trk { flex: 1; min-height: 0; }
    .vsb .th { background: #cdcdcd; }
    .hsb { height: 16px; display: flex; background: #f0f0f0; grid-column: 1 / -1; align-items: stretch; }
    .hsb .ar { width: 16px; display: flex; align-items: center; justify-content: center; flex: none; }
    .hsb .trk { flex: 1; min-width: 0; }
    .hsb .th { background: #cdcdcd; height: 16px; }
    .view { height: 617px; background: #fff; flex: none; }
    .conout { margin: 4px 5px 0 3px; height: 228px; border: 1px solid #dcdcdc; padding: 1px; box-sizing: border-box; flex: none; }
    .con { height: 224px; display: flex; background: #fff; border: 1px solid #808080; box-sizing: border-box; }
    .conbody { flex: 1; padding: 9px 0 0 3px; font: 11.63px/19px 'DejaVu Sans Mono', monospace; white-space: pre; overflow: hidden; color: #111; }
    .conbody b { font-weight: bold; letter-spacing: .88px; }
    .warn { color: #b9752f; }
    .ctabs { flex: none; margin: -1px 0 0 3px; font: 12.36px 'Liberation Sans', sans-serif; }
    .fsets { display: flex; flex-direction: column; align-items: center; flex: none; height: 423px; padding: 7px 0 0 3px; box-sizing: border-box; }
    fieldset { margin: 0; border: 1px solid #dcdcdc; min-width: 0; }
    legend { padding: 0 2px; height: 14px; line-height: 16px; margin-left: 0; white-space: nowrap; }
    .fsets fieldset { width: 252px; box-sizing: border-box; padding: 8px 6px 5px; margin-bottom: 1px; }
    .bgrid { display: grid; grid-template-columns: repeat(6, 38px); grid-auto-rows: 38px; gap: 2px; }
    .pb { border: 1px solid #adadad; background: #e1e1e1; box-sizing: border-box; display: flex; align-items: center; justify-content: center; }
    .pb.on { background: #cce4f7; border-color: #005499; }
    .formwrap { display: flex; height: 407px; flex: none; margin-right: 4px; }
    .form { flex: 1; overflow: hidden; padding: 0 5px 0 15px; min-width: 0; box-sizing: border-box; }
    .form fieldset { box-sizing: border-box; padding: 12px 9px 7px; height: 55px; }
    .form fieldset legend { margin-left: -3px; }
    .form .f1 { margin-top: -2px; }
    .form .f2 { margin-top: 6px; height: 54px; padding-top: 11px; }
    .irow { display: flex; align-items: center; height: 21px; margin-top: 8px; gap: 6px; white-space: nowrap; }
    .irow > span { width: 83px; flex: none; }
    .input { height: 21px; box-sizing: border-box; background: #fff; border: 1px solid #7a7a7a; padding-left: 2px; line-height: 20px; }
    .input.hl { background: #fc8; box-shadow: inset 0 0 0 1px #fff; flex: 1; }
    .note { margin-top: 7px; height: 14px; }
    .frow { display: grid; grid-template-columns: 212px 184px; align-items: center; height: 21px; margin-top: 6px; white-space: nowrap; }
    .chk { display: flex; align-items: center; gap: 4px; height: 21px; margin: 5px 0 -1px; }
    .chk i { width: 11px; height: 11px; border: 1px solid #333; background: #fff; display: block; }
    .rhsb { margin-left: 6px; width: 409px; }
    .rtabs { margin-top: 5px; padding-left: 1px; }
    .rtabs .act { width: 116px; text-align: left; }
    .rtabs .ina { width: 61px; box-sizing: border-box; }
    .status { height: 24px; display: flex; }
    .stxt { width: 295px; box-sizing: border-box; padding: 5px 0 0 2px; border-right: 1px solid #d8d8d8; white-space: nowrap; flex: none; }
    .sbox { margin-left: 504px; width: 437px; height: 22px; box-sizing: border-box; background: #e6e6e6; border: 1px solid #c0c0c0; flex: none; }
    .serr { margin: 1px 0 0 39px; width: 21px; height: 19px; background: #ddd; border: 1px solid #bbb; box-sizing: border-box; display: flex; align-items: center; justify-content: center; flex: none; }
    .sgrip { margin-left: 4px; border-left: 1px solid #ddd; flex: 1; }
  `;

  render() {
    return html`
      <svg class="defs" width="0" height="0">
        <defs>
          <linearGradient id="or" x1="0" y1="0" x2="1" y2="1"><stop offset="0" stop-color="#f7d09c"></stop><stop offset="1" stop-color="#c47414"></stop></linearGradient>
          <linearGradient id="nv" x1="0" y1="0" x2="1" y2="1"><stop offset="0" stop-color="#2f70ac"></stop><stop offset="1" stop-color="#0b3057"></stop></linearGradient>
          <linearGradient id="gr" x1="0" y1="0" x2="0" y2="1"><stop offset="0" stop-color="#b8e04a"></stop><stop offset="1" stop-color="#3f8410"></stop></linearGradient>
          <linearGradient id="tn" x1="0" y1="0" x2="1" y2="1"><stop offset="0" stop-color="#d0b890"></stop><stop offset="1" stop-color="#7a6040"></stop></linearGradient>
          <linearGradient id="dc" x1="0" y1="0" x2="1" y2="1"><stop offset="0" stop-color="#fff"></stop><stop offset="1" stop-color="#c4ced4"></stop></linearGradient>
          <linearGradient id="cr" x1="0" y1="0" x2="1" y2="1"><stop offset="0" stop-color="#fff4e4"></stop><stop offset="1" stop-color="#e8c898"></stop></linearGradient>
          <linearGradient id="bl" x1="0" y1="0" x2="1" y2="1"><stop offset="0" stop-color="#8fb8e0"></stop><stop offset="1" stop-color="#1c5aa4"></stop></linearGradient>
          <linearGradient id="bl2" x1="0" y1="0" x2="1" y2="0"><stop offset="0" stop-color="#5060c0"></stop><stop offset="1" stop-color="#e8eef8"></stop></linearGradient>
          <radialGradient id="bl3"><stop offset="0" stop-color="#c8d0f0"></stop><stop offset="1" stop-color="#4a58a8"></stop></radialGradient>
          <linearGradient id="ye" x1="0" y1="0" x2="1" y2="1"><stop offset="0" stop-color="#ffee90"></stop><stop offset="1" stop-color="#eeb020"></stop></linearGradient>
          <linearGradient id="hot" x1="0" y1="0" x2="1" y2="0"><stop offset="0" stop-color="#e82010"></stop><stop offset="1" stop-color="#fcd020"></stop></linearGradient>
        </defs>
      </svg>
      <div class="menu">
        ${['Файл', 'Вид', 'Правка', 'Отображение', 'Инструменты', 'Расчёт', 'Помощь'].map(m => html`<span>${m}</span>`)}
      </div>
      <div class="toolbar">
        <div class="tgroup" style="width:307px"><div class="handle"></div>${TB1.map(tbBtn)}</div>
        <div class="tgroup" style="width:692px"><div class="handle wide"></div>${TB2.map(tbBtn)}<span class="more">»</span></div>
        ${TB3.map(n => html`<div class="tgroup" style="width:53px"><div class="handle"></div>${tbBtn(n)}<span class="more">»</span></div>`)}
      </div>
      <div class="main">
        <div class="col">
          <div class="dtitle lt"><span>Дерево</span>${dockBtns}</div>
          <div class="curview"><span>Текущий вид</span>${combo('Полное дерево')}</div>
          <div class="box tree">
            <div class="thead">
              <div class="n">Имя</div>
              <div class="i">ID${chev('u')}</div>
            </div>
            ${TREE.map(r => html`
              <div class="trow ${r.cls ?? ''}" style="padding-left:${r.depth * 20}px">
                <div class="exp ${r.exp ?? ''}">${r.exp ? chev(r.exp === 'o' ? 'd' : 'r') : ''}</div>
                <div class="tcell">${icon(r.icon, 18)}<span class="name">${r.label}</span><span class="id">${r.id ?? ''}</span></div>
              </div>`)}
          </div>
          <div class="tabs ltabs"><div class="act">Дерево</div><div class="ina">Инструменты</div></div>
          <div class="dtitle prop lt"><span>Страница свойств</span>${dockBtns}</div>
          <div class="box props">
            <div class="pbody">
              <div class="phead"><div class="a">Свойство</div><div class="b">Значение</div></div>
              ${PROPS.map(([k, v, d]) => html`
                <div class="prow">
                  <div class="lbl ${d ? 'ind' : 'gr'}">${d ? '' : html`<span class="tw">${chev('d')}</span>`}<span>${k}</span></div>
                  <span>${v}</span>
                </div>`)}
            </div>
            ${vbar(64, 187)}
            ${hbar(1, 316)}
          </div>
        </div>
        <div class="col">
          <div class="view">
            <svg width="477" height="617" viewBox="0 -420 1431 1851">${scene()}</svg>
          </div>
          <div class="dtitle cmd"><span>Командная строка</span>${dockBtns}</div>
          <div class="conout">
            <div class="con">
              <div class="conbody"><b>Fidesys&gt;</b> undo group end

<b>Fidesys&gt;</b> create contact master surface 1 slave surface 18
type general friction 0.0 ignore_overlap off offset 0.0
tolerance {TOL} method penalty normal_stiffness 1.0
tangent_stiffness 0.5
<span class="warn">WARNING: Aprepro:  Undefined variable 'TOL'
(interactive_input, line 567)</span>


<b>Fidesys&gt;</b></div>
              ${vbar(170, 18, 18)}
            </div>
          </div>
          <svg class="ctabs" width="300" height="20" viewBox="403 935 300 20">
            <path d="M404 935c2 5 3 15 8 15h41c4 0 4-8 7-15" fill="#f0f0f0" stroke="#555"></path>
            <path d="M610 935c2 5 3 15 8 15h53c4 0 5-8 7-15" fill="#f0f0f0" stroke="#555"></path>
            <path d="M541 935c2 5 3 15 8 15h52c4 0 4-8 7-15" fill="#f0f0f0" stroke="#555"></path>
            <path d="M460 935c2 5 3 16 8 16h62c4 0 4-9 8-16" fill="#fff" stroke="#555"></path>
            <text x="414" y="947">Python</text>
            <text x="475" y="948">Команды</text>
            <text x="552" y="947">Ошибки</text>
            <text x="621" y="947">История</text>
          </svg>
        </div>
        <div class="col">
          <div class="dtitle rt"><span>Панель команд</span>${dockBtns}</div>
          <div class="fsets">
            <fieldset><legend>Режим - Граничные условия</legend>${btnGrid(MODE)}</fieldset>
            <fieldset><legend>Объект - Контакт</legend>${btnGrid(OBJ)}</fieldset>
            <fieldset><legend>Действие - Создать</legend>${btnGrid(ACT)}</fieldset>
          </div>
          <div class="formwrap">
            <div class="form">
              <fieldset class="f1"><legend>Список сущностей</legend>${combo('Поверхность')}</fieldset>
              <div class="irow"><span>ID объекта(ов)</span><div class="input hl">1</div></div>
              <div class="note">Побочная сущность:</div>
              <fieldset class="f2"><legend>Список сущностей</legend>${combo('Поверхность')}</fieldset>
              <div class="irow"><span>ID объекта(ов)</span><div class="input hl">18</div></div>
              <div class="frow"><span>Тип</span>${combo('Общий')}</div>
              <div class="frow"><span>Коэффициент трения</span><div class="input">0.0</div></div>
              <div class="chk"><i></i><span>Игнорировать начальный нахлест</span></div>
              <div class="frow"><span>Зазор</span><div class="input">0.0</div></div>
              <div class="frow"><span>Точность</span><div class="input">{TOL}</div></div>
              <div class="frow"><span>Метод</span>${combo('Штрафов')}</div>
              <div class="frow"><span>Жесткость контакта по нормали</span><div class="input">1.0</div></div>
              <div class="frow"><span>Жесткость контакта по касательной</span><div class="input">0.5</div></div>
            </div>
            ${vbar(82, 231, 24)}
          </div>
          <div class="rhsb">${hbar(1, 370)}</div>
          <div class="tabs rtabs"><div class="act">Панель команд</div><div class="ina">Мастер</div></div>
        </div>
      </div>
      <div class="status">
        <div class="stxt">Рабочая директория: C:/Users/Gudkova/Documents</div>
        <div class="sbox"></div>
        <div class="serr">
          <svg width="17" height="17" viewBox="0 0 17 17"><circle cx="8.500" cy="8.500" r="7.500" fill="#e8102a" stroke="#7a0010"></circle><path d="M6 6l5 5M11 6l-5 5" stroke="#fff" stroke-width="2"></path></svg>
        </div>
        <div class="sgrip"></div>
      </div>
    `;
  }
}
